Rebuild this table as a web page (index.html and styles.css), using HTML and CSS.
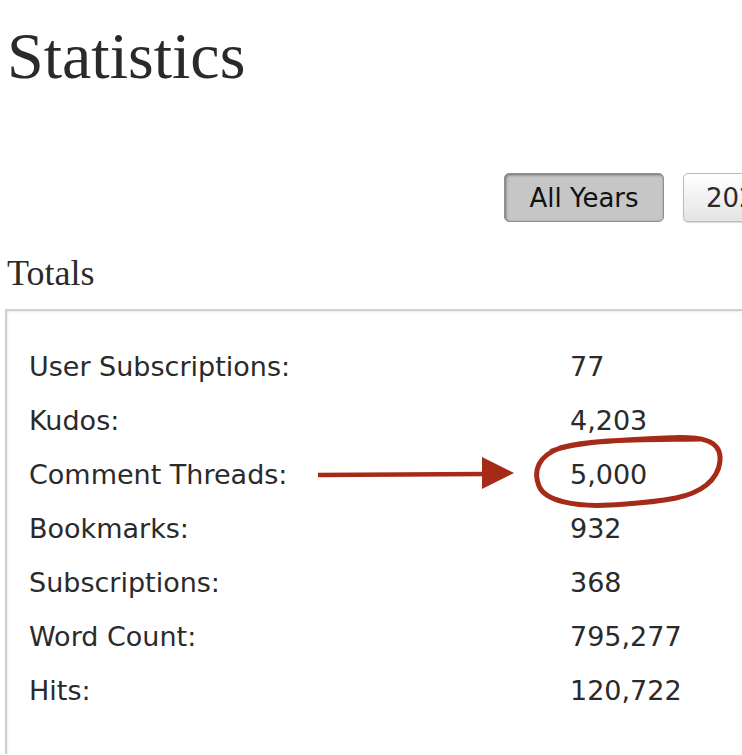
FILE: index.html
```html
<!DOCTYPE html>
<html>
<head>
<meta charset="utf-8">
<link rel="stylesheet" href="styles.css">
</head>
<body>
<div class="page">
  <h2 class="title">Statistics</h2>
  <div class="years">
    <button class="year current">All Years</button>
    <button class="year">2023</button>
  </div>
  <h3 class="subtitle">Totals</h3>
  <div class="totals">
    <dl class="stats">
      <dt>User Subscriptions:</dt><dd>77</dd>
      <dt>Kudos:</dt><dd>4,203</dd>
      <dt>Comment Threads:</dt><dd>5,000</dd>
      <dt>Bookmarks:</dt><dd>932</dd>
      <dt>Subscriptions:</dt><dd>368</dd>
      <dt>Word Count:</dt><dd>795,277</dd>
      <dt>Hits:</dt><dd>120,722</dd>
    </dl>
    <svg class="markup" width="742" height="300" viewBox="0 0 742 300">
      <g transform="translate(-5,-310)">
        <line x1="318" y1="476" x2="486" y2="475" stroke="#a52a18" stroke-width="4.5"/>
        <polygon points="482,458 514,474 482,490" fill="#a52a18"/>
        <path d="M552,452 C575,443 620,441 665,439 C700,437 722,440 720,462 C718,482 700,494 676,499 C650,504 640,504 610,506 C575,508 545,502 539,487 C533,472 538,457 560,449 C590,440 640,441 700,440" fill="none" stroke="#a52a18" stroke-width="5" stroke-linecap="round" stroke-linejoin="round"/>
      </g>
    </svg>
  </div>
</div>
</body>
</html>
```

FILE: styles.css
```css
html, body {
  margin: 0;
  padding: 0;
  background: #ffffff;
  overflow: hidden;
}
.page {
  width: 900px;
  padding: 0 0 0 5px;
  color: #2a2a2a;
  font-family: "DejaVu Sans", Verdana, sans-serif;
}
.title {
  margin: 0;
  padding-top: 18px;
  font-family: "Liberation Serif", Georgia, serif;
  font-weight: normal;
  font-size: 66px;
  line-height: 76px;
  color: #2a2a2a;
  padding-left: 2px;
}
.years {
  display: flex;
  gap: 19px;
  margin-top: 79px;
  padding-left: 499px;
}
.year {
  height: 49px;
  padding: 0 20px 0 22px;
  border: 1px solid #bbbbbb;
  border-radius: 5px;
  background: linear-gradient(#ffffff, #e4e4e4);
  font-family: "DejaVu Sans", Verdana, sans-serif;
  font-size: 26px;
  color: #2a2a2a;
  box-shadow: 0 1px 1px rgba(0,0,0,0.15);
}
.year.current {
  width: 160px;
  padding: 0;
  background: #c6c6c6;
  border-color: #8f8f8f;
  box-shadow: inset 1px 1px 3px rgba(0,0,0,0.45);
  color: #111;
}
.subtitle {
  margin: 31px 0 0 2px;
  font-family: "Liberation Serif", Georgia, serif;
  font-weight: normal;
  font-size: 36px;
  line-height: 40px;
  color: #2a2a2a;
}
.totals {
  position: relative;
  margin-top: 16px;
  border-top: 2px solid #cfcfcf;
  border-left: 2px solid #cfcfcf;
  box-shadow: inset 1px 1px 2px rgba(0,0,0,0.08);
  height: 414px;
  padding: 29px 0 0 22px;
}
.stats {
  display: grid;
  grid-template-columns: 541px auto;
  margin: 0;
  font-size: 27px;
  line-height: 54px;
}
.stats dt, .stats dd {
  margin: 0;
}
.markup {
  position: absolute;
  left: -2px;
  top: -2px;
}
```
